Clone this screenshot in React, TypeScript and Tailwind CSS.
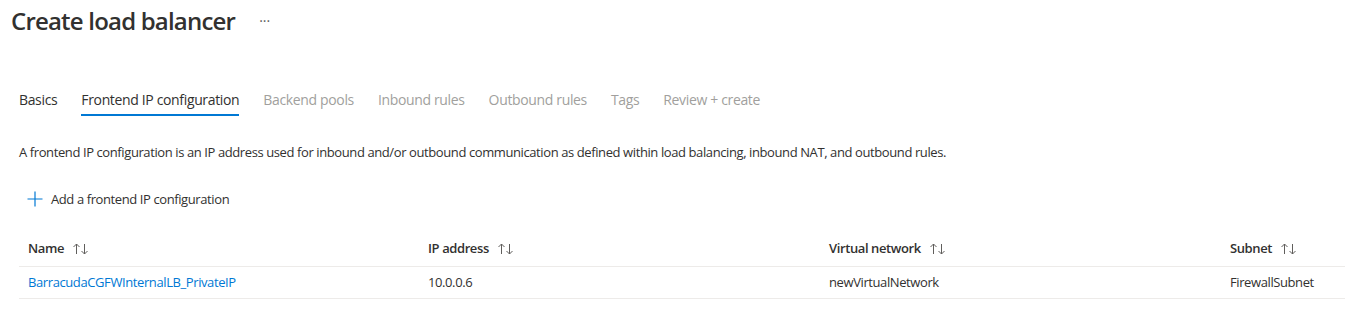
import React from "react";

const tabs = [
  { label: "Basics", state: "done" },
  { label: "Frontend IP configuration", state: "active" },
  { label: "Backend pools", state: "off" },
  { label: "Inbound rules", state: "off" },
  { label: "Outbound rules", state: "off" },
  { label: "Tags", state: "off" },
  { label: "Review + create", state: "off" },
];

const columns = ["Name", "IP address", "Virtual network", "Subnet"];

const SortIcon: React.FC = () => (
  <svg width="18" height="14" viewBox="0 0 18 14" className="ml-[8px] text-[#605e5c]" fill="none" stroke="currentColor" strokeWidth="1">
    <path d="M4.5 12V2M1.5 5l3-3 3 3" />
    <path d="M12.5 2v10M9.5 9l3 3 3-3" />
  </svg>
);

const App: React.FC = () => {
  return (
    <div
      className="h-[311px] w-[1345px] overflow-hidden bg-white text-[#323130]"
      style={{ fontFamily: '"Open Sans", "Noto Sans", sans-serif' }}
    >
      <header className="flex items-center pl-[11px] pt-[5px]">
        <h1 className="text-[24px] font-semibold leading-[32px] tracking-[-0.8px]">Create load balancer</h1>
        <span className="ml-[24px] text-[14px] leading-none text-[#605e5c]">···</span>
      </header>

      <nav className="mt-[53px] flex gap-[24px] pl-[19px] text-[14px] tracking-[-0.35px]">
        {tabs.map((tab) => (
          <div
            key={tab.label}
            className={
              tab.state === "active"
                ? "border-b-2 border-[#0078d4] pb-[4px] leading-[20px] text-[#323130]"
                : tab.state === "done"
                ? "pb-[6px] leading-[20px] text-[#323130]"
                : "pb-[6px] leading-[20px] text-[#a19f9d]"
            }
          >
            {tab.label}
          </div>
        ))}
      </nav>

      <div className="text-[13px] tracking-[-0.4px]">
        <p className="mt-[27px] pl-[19px] leading-[18px]">
          A frontend IP configuration is an IP address used for inbound and/or outbound communication as defined within load balancing, inbound NAT, and outbound rules.
        </p>

        <button type="button" className="ml-[27px] mt-[28px] flex items-center leading-[20px] text-[#323130]">
          <svg width="16" height="16" viewBox="0 0 16 16" stroke="#0078d4" strokeWidth="1.2">
            <path d="M8 0.5v15M0.5 8h15" />
          </svg>
          <span className="ml-[8px]">Add a frontend IP configuration</span>
        </button>

        <div className="ml-[19px] mt-[20px]">
          <div className="grid h-[38px] grid-cols-[400px_401px_401px_1fr] items-center border-b border-[#edebe9] pt-[2px]">
            {columns.map((col) => (
              <div key={col} className="flex items-center pl-[9px] font-semibold">
                {col}
                <SortIcon />
              </div>
            ))}
          </div>
          <div className="grid h-[32px] grid-cols-[400px_401px_401px_1fr] items-center border-b border-[#edebe9]">
            <div className="pl-[9px] text-[#0078d4]">BarracudaCGFWInternalLB_PrivateIP</div>
            <div className="pl-[9px]">10.0.0.6</div>
            <div className="pl-[9px]">newVirtualNetwork</div>
            <div className="pl-[9px]">FirewallSubnet</div>
          </div>
        </div>
      </div>
    </div>
  );
};

export default App;
